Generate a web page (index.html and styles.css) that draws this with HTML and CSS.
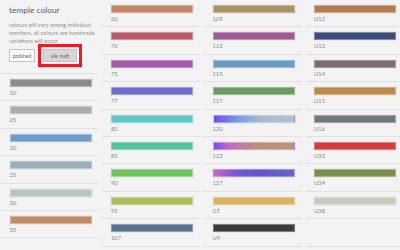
FILE: index.html
```html
<!DOCTYPE html>
<html>
<head>
<meta charset="utf-8">
<link rel="stylesheet" href="styles.css">
</head>
<body>
<div class="page">
  <div class="col side">
    <div class="intro">
      <h1 class="title">temple colour</h1>
      <p class="desc">colours will vary among individual<br>monitors. all colours are handmade.<br>variations will occur</p>
      <div class="finishes">
        <button class="btn">polished</button>
        <button class="btn active">silk matt</button>
      </div>
    </div>
    <div class="row"><div class="sw" style="background:#8c8c8c"></div><span class="lbl">10</span></div>
    <div class="row"><div class="sw" style="background:#ababab"></div><span class="lbl">05</span></div>
    <div class="row"><div class="sw" style="background:#6f9dc8"></div><span class="lbl">20</span></div>
    <div class="row"><div class="sw" style="background:#9aaebb"></div><span class="lbl">25</span></div>
    <div class="row"><div class="sw" style="background:#b5c6bd"></div><span class="lbl">30</span></div>
    <div class="row"><div class="sw" style="background:#c08a66"></div><span class="lbl">35</span></div>
  </div>
  <div class="col">
    <div class="row"><div class="sw" style="background:#c3846a"></div><span class="lbl">60</span></div>
    <div class="row"><div class="sw" style="background:#ba5b6c"></div><span class="lbl">70</span></div>
    <div class="row"><div class="sw" style="background:#a35aab"></div><span class="lbl">75</span></div>
    <div class="row"><div class="sw" style="background:#6d6dcb"></div><span class="lbl">77</span></div>
    <div class="row"><div class="sw" style="background:#5cc6c8"></div><span class="lbl">80</span></div>
    <div class="row"><div class="sw" style="background:#52c2a0"></div><span class="lbl">85</span></div>
    <div class="row"><div class="sw" style="background:#72c262"></div><span class="lbl">90</span></div>
    <div class="row"><div class="sw" style="background:#abbb5a"></div><span class="lbl">95</span></div>
    <div class="row"><div class="sw" style="background:#5c7293"></div><span class="lbl">107</span></div>
  </div>
  <div class="col">
    <div class="row"><div class="sw" style="background:#ab9262"></div><span class="lbl">109</span></div>
    <div class="row"><div class="sw" style="background:#9c5c93"></div><span class="lbl">113</span></div>
    <div class="row"><div class="sw" style="background:#6b9cc2"></div><span class="lbl">115</span></div>
    <div class="row"><div class="sw" style="background:#6c9c62"></div><span class="lbl">117</span></div>
    <div class="row"><div class="sw" style="background:linear-gradient(90deg,#6a4ee6 0%,#7c9ae6 30%,#a8bcd0 60%,#b0c0cc 100%)"></div><span class="lbl">120</span></div>
    <div class="row"><div class="sw" style="background:linear-gradient(90deg,#7a4ee6 0%,#c46cc8 20%,#b88e80 50%,#c09274 100%)"></div><span class="lbl">123</span></div>
    <div class="row"><div class="sw" style="background:linear-gradient(90deg,#c866c8 0%,#7452d8 30%,#6458cc 60%,#6464c8 100%)"></div><span class="lbl">127</span></div>
    <div class="row"><div class="sw" style="background:#d9b264"></div><span class="lbl">GT</span></div>
    <div class="row"><div class="sw" style="background:#3c3c3c"></div><span class="lbl">U9</span></div>
  </div>
  <div class="col">
    <div class="row"><div class="sw" style="background:#b27c52"></div><span class="lbl">U12</span></div>
    <div class="row"><div class="sw" style="background:#3c4b7a"></div><span class="lbl">U13</span></div>
    <div class="row"><div class="sw" style="background:#7c6c72"></div><span class="lbl">U14</span></div>
    <div class="row"><div class="sw" style="background:#ba8a4a"></div><span class="lbl">U15</span></div>
    <div class="row"><div class="sw" style="background:#72767a"></div><span class="lbl">U16</span></div>
    <div class="row"><div class="sw" style="background:#d23c3c"></div><span class="lbl">U33</span></div>
    <div class="row"><div class="sw" style="background:#7c8c4a"></div><span class="lbl">U34</span></div>
    <div class="row"><div class="sw" style="background:#cacabc"></div><span class="lbl">U38</span></div>
    <div class="row empty"></div>
  </div>
</div>
</body>
</html>
```

FILE: styles.css
```css
html, body {
  margin: 0;
  padding: 0;
  background: #f3f3f3;
  overflow: hidden;
}
body {
  font-family: "Lato", "Liberation Sans", sans-serif;
  color: #8a8a8a;
}
.page {
  display: grid;
  grid-template-columns: repeat(4, 101.5px);
  width: 410px;
}
.col {
  display: flex;
  flex-direction: column;
  padding-right: 3px;
}
.intro {
  padding: 5px 0 0 9px;
  height: 68px;
  border-bottom: 1px solid #e2e2e2;
}
.title {
  margin: 0;
  font-size: 8.4px;
  line-height: 11px;
  font-weight: 400;
  color: #5a5a78;
}
.desc {
  margin: 5px 0 0;
  font-size: 5.6px;
  line-height: 8px;
  font-weight: 400;
  color: #909090;
  white-space: nowrap;
}
.finishes {
  display: flex;
  gap: 8px;
  margin-top: 4px;
}
.btn {
  font-family: inherit;
  font-size: 5px;
  color: #666;
  background: #fbfbfb;
  border: 1px solid #c4c4c4;
  padding: 0;
  height: 13px;
  width: 26px;
  cursor: pointer;
}
.btn.active {
  width: 34px;
  background: #d6d6d6;
  outline: 3px solid #ec1c24;
  outline-offset: 2px;
}
.row {
  padding: 5px 0 3px 9.5px;
  height: 18.4px;
  border-bottom: 1px solid #e2e2e2;
  display: flex;
  flex-direction: column;
}
.sw {
  width: 82px;
  height: 8px;
  box-sizing: border-box;
  border: 1px solid rgba(255,255,255,0.35);
  box-shadow: 0 0 0 0.5px rgba(0,0,0,0.08);
  flex: none;
}
.lbl {
  margin-top: 1px;
  font-size: 5.8px;
  line-height: 9.4px;
  font-weight: 400;
  color: #8a8a8a;
}
```
